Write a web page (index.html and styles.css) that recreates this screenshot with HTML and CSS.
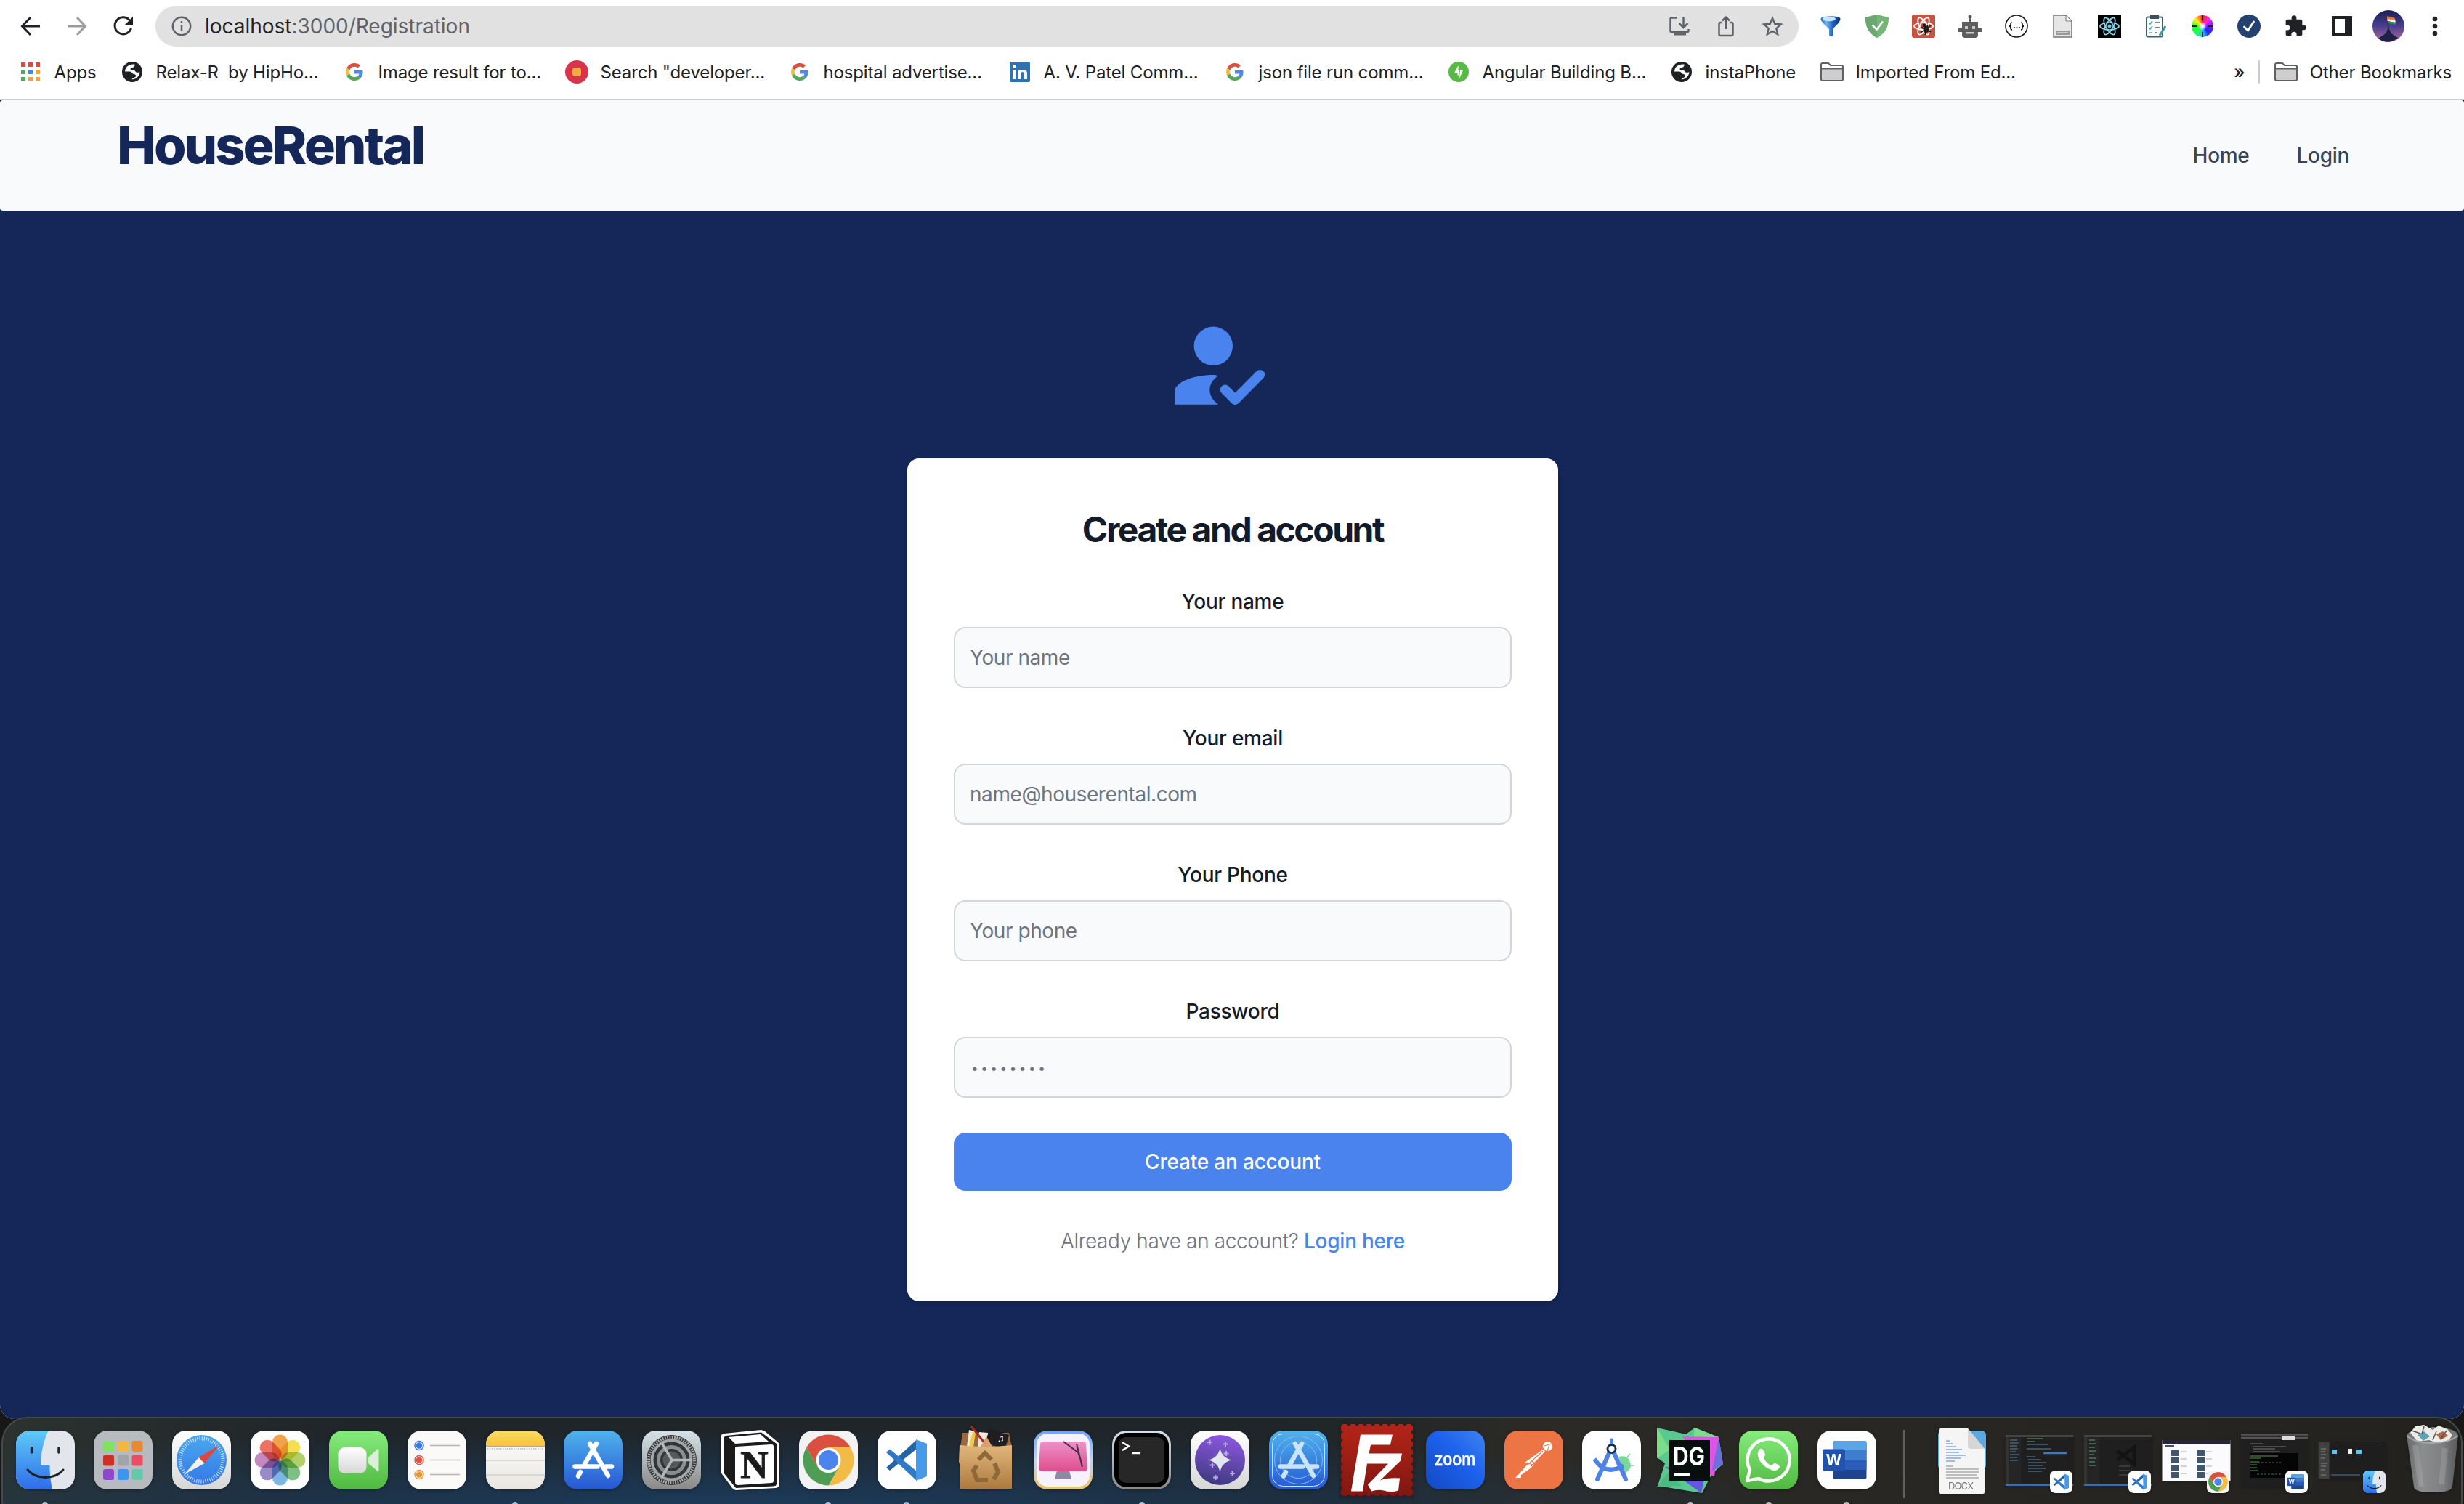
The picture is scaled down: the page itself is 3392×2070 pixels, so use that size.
FILE: index.html
```html
<!DOCTYPE html>
<html lang="en">
<head>
<meta charset="utf-8">
<title>HouseRental</title>
<link rel="stylesheet" href="styles.css">
</head>
<body>
<svg class="defs" width="0" height="0">
  <defs>
    <linearGradient id="gBlue" x1="0" y1="0" x2="0" y2="1"><stop offset="0" stop-color="#4fb3ec"/><stop offset="1" stop-color="#2657d3"/></linearGradient>
    <linearGradient id="gFinder" x1="0" y1="0" x2="0" y2="1"><stop offset="0" stop-color="#5ecbf7"/><stop offset="1" stop-color="#2f6ceb"/></linearGradient>
    <linearGradient id="gWhite" x1="0" y1="0" x2="0" y2="1"><stop offset="0" stop-color="#ffffff"/><stop offset="1" stop-color="#d6d6d6"/></linearGradient>
    <linearGradient id="gPaper" x1="0" y1="0" x2="0" y2="1"><stop offset="0" stop-color="#ffffff"/><stop offset="1" stop-color="#e9e6e0"/></linearGradient>
    <linearGradient id="gGreen" x1="0" y1="0" x2="0" y2="1"><stop offset="0" stop-color="#86ec7d"/><stop offset="1" stop-color="#50b940"/></linearGradient>
    <linearGradient id="gSafari" x1="0" y1="0" x2="0" y2="1"><stop offset="0" stop-color="#4aa8ee"/><stop offset="1" stop-color="#3578e6"/></linearGradient>
    <linearGradient id="gYellow" x1="0" y1="0" x2="0" y2="1"><stop offset="0" stop-color="#fbdc67"/><stop offset="1" stop-color="#f6c338"/></linearGradient>
    <linearGradient id="gGrey" x1="0" y1="0" x2="0" y2="1"><stop offset="0" stop-color="#d5e2e9"/><stop offset="1" stop-color="#8b8986"/></linearGradient>
    <linearGradient id="gPink" x1="0" y1="0" x2="0" y2="1"><stop offset="0" stop-color="#ec92c8"/><stop offset="1" stop-color="#df4d8c"/></linearGradient>
    <linearGradient id="gClean" x1="0" y1="0" x2="0" y2="1"><stop offset="0" stop-color="#6ea2f8"/><stop offset=".5" stop-color="#c4d4f5"/><stop offset="1" stop-color="#edc460"/></linearGradient>
    <linearGradient id="gPurple" x1=".6" y1="0" x2=".4" y2="1"><stop offset="0" stop-color="#8c57e0"/><stop offset="1" stop-color="#3e3a80"/></linearGradient>
    <linearGradient id="gZoom" x1="1" y1="0" x2="0" y2="1"><stop offset="0" stop-color="#4084ee"/><stop offset=".4" stop-color="#1f63ee"/><stop offset="1" stop-color="#1249c4"/></linearGradient>
    <linearGradient id="gRed" x1="0" y1="0" x2="0" y2="1"><stop offset="0" stop-color="#b52418"/><stop offset="1" stop-color="#801711"/></linearGradient>
    <linearGradient id="gBag" x1="0" y1="0" x2="0" y2="1"><stop offset="0" stop-color="#e2b77b"/><stop offset="1" stop-color="#ab793f"/></linearGradient>
    <linearGradient id="gTrash" x1="0" y1="0" x2="1" y2="0"><stop offset="0" stop-color="#686a6b"/><stop offset=".3" stop-color="#8b8d8e"/><stop offset=".7" stop-color="#7d7f80"/><stop offset="1" stop-color="#55575a"/></linearGradient>
    <linearGradient id="gSky" x1="0" y1="0" x2="0" y2="1"><stop offset="0" stop-color="#1b1e57"/><stop offset=".5" stop-color="#493f8f"/><stop offset="1" stop-color="#b76b9c"/></linearGradient>
    <linearGradient id="gFunnel" x1="0" y1="0" x2="1" y2="0"><stop offset="0" stop-color="#1f6fd0"/><stop offset=".3" stop-color="#6fb5f2"/><stop offset=".6" stop-color="#1d66c4"/><stop offset="1" stop-color="#0b2f6b"/></linearGradient>

    <symbol id="google" viewBox="0 0 48 48"><path fill="#d9503f" d="M24 9.5c3.5 0 6.700 1.200 9.200 3.600l6.900-6.900C35.900 2.400 30.500 0 24 0 14.600 0 6.500 5.400 2.600 13.200l8 6.200C12.400 13.700 17.700 9.500 24 9.500z"/><path fill="#4f87ec" d="M47 24.600c0-1.600-.2-3.100-.4-4.600H24v9h12.900c-.6 3-2.200 5.500-4.800 7.200l7.700 6C44.400 38 47 31.800 47 24.600z"/><path fill="#f2bd42" d="M10.500 28.600c-.5-1.500-.8-3-.8-4.600s.3-3.100.8-4.600l-8-6.200C.9 16.500 0 20.100 0 24s.9 7.500 2.600 10.800z"/><path fill="#58a65c" d="M24 48c6.500 0 11.900-2.100 15.900-5.800l-7.700-6c-2.200 1.500-4.900 2.300-8.200 2.300-6.300 0-11.600-4.200-13.500-9.900l-8 6.200C6.500 42.600 14.600 48 24 48z"/></symbol>
    <symbol id="globe" viewBox="0 0 28 28"><circle cx="14" cy="14" r="14" fill="#202124"/><path d="M18 3.500C11 2.500 4.500 7 4 13c2 2.500 6 1 8 2.500 1.500 1.500 5 1.500 5 3.500 0 2-4 1.500-4 4.500" fill="none" stroke="#fff" stroke-width="0"/><path fill="#fff" d="M17.500 3.600C10 2.500 4.200 7 4 13.500l6.500 0c3 0 3.500 3 5.500 3.500 2 .4 3.500.8 3 3-.4 2-4.500 1.500-5.500 4.300C19 24.500 24.400 20 24.300 14c-2 1.300-4.800 1.200-6-.8-.8-1.600-3.300-1.200-5.300-1.600-2.400-.6-1.500-3 .5-3.300 2.500-.3 4.500-1.700 4-4.700z"/></symbol>
    <symbol id="folder" viewBox="0 0 32 26"><path d="M1 9h30v14a2 2 0 0 1-2 2H3a2 2 0 0 1-2-2z" fill="#cecece"/><path d="M1 23V3a2 2 0 0 1 2-2h8l3 3h15a2 2 0 0 1 2 2v17a2 2 0 0 1-2 2H3a2 2 0 0 1-2-2zM1 8.500h30" fill="none" stroke="#5f6063" stroke-width="2"/></symbol>
    <symbol id="atom" viewBox="0 0 32 32"><g fill="none" stroke="currentColor" stroke-width="1.700"><ellipse cx="16" cy="16" rx="13" ry="5"/><ellipse cx="16" cy="16" rx="13" ry="5" transform="rotate(60 16 16)"/><ellipse cx="16" cy="16" rx="13" ry="5" transform="rotate(120 16 16)"/></g></symbol>

    <symbol id="finder" viewBox="0 0 81 81"><rect width="81" height="81" rx="19" fill="#e3e5ec"/><path d="M45 0C38 15 34.500 32 34.500 47h12c0 12 1 23 3.500 34H19A19 19 0 0 1 0 62V19A19 19 0 0 1 19 0z" fill="url(#gFinder)"/><path d="M45 0C38 15 34.500 32 34.500 47h12" fill="none" stroke="#fff" stroke-opacity=".5"/><path d="M21.500 24v6M59 24v6" stroke="#1d2837" stroke-width="3.500" stroke-linecap="round"/><path d="M16 54c12 14 37 14 49 0" fill="none" stroke="#1d2128" stroke-width="3" stroke-linecap="round"/></symbol>
    <symbol id="chrome" viewBox="0 0 81 81"><rect width="81" height="81" rx="19" fill="#f2f2f2"/><path d="M40.500 40.500L10.200 23A35 35 0 0 1 70.800 23z" fill="#d95040"/><path d="M40.500 23h30.300A35 35 0 0 1 40.500 75.500L55.700 49.200z" fill="#f2bb45"/><path d="M40.500 75.500A35 35 0 0 1 10.200 23L25.300 49.200A17.500 17.500 0 0 0 55.700 49.200z" fill="#4f9c55"/><path d="M10.200 23L25.300 49.200 33 30z" fill="#d95040"/><circle cx="40.500" cy="40.500" r="17" fill="#fff"/><circle cx="40.500" cy="40.500" r="13.500" fill="#4b84ec"/></symbol>
    <symbol id="vscode" viewBox="0 0 81 81"><rect width="81" height="81" rx="19" fill="#fff"/><path d="M12 51l5 4 37-30V12.500z" fill="#2364a5"/><path d="M12 30l5-4.500L54 56v13z" fill="#2f7ac7"/><path d="M53 12l15 6v45l-15 6z" fill="#479ae9"/></symbol>
    <symbol id="word" viewBox="0 0 81 81"><rect width="81" height="81" rx="19" fill="#fff"/><rect x="21.500" y="14" width="46" height="53" rx="3" fill="#1e438f"/><path d="M21.500 41h46v13h-46z" fill="#2b5cb8"/><path d="M21.500 27h46v14h-46z" fill="#3f7dce"/><path d="M21.500 27V17a3 3 0 0 1 3-3h40a3 3 0 0 1 3 3v10z" fill="#5ba4e6"/><rect x="7" y="25.500" width="31" height="30" rx="3" fill="#2152ae"/><text x="22.500" y="48" font-size="21" font-weight="700" fill="#fff" text-anchor="middle">W</text></symbol>
    <symbol id="appA" viewBox="0 0 81 81"><g stroke="currentColor" stroke-width="6.500" stroke-linecap="round" fill="none"><path d="M45 18L29 46M36 18l25 44M15.500 49.500h31M58 49.500h8M23 57l-3 5.500"/></g></symbol>
    <symbol id="codewin" viewBox="0 0 94 70"><rect width="94" height="70" fill="#1f1f20"/><rect width="94" height="3" fill="#444"/><rect y="3" width="5" height="65" fill="#333"/><rect x="5" y="3" width="17" height="65" fill="#252526"/><rect y="68" width="94" height="2" fill="#2473c8"/></symbol>
  </defs>
</svg>

<div class="window">
  <header class="toolbar">
    <div class="cell"><svg width="28" height="28" viewBox="0 0 28 28" fill="none" stroke="#202124" stroke-width="3"><path d="M27 14H3M14 2L2.500 14 14 26"/></svg></div>
    <div class="cell"><svg width="28" height="28" viewBox="0 0 28 28" fill="none" stroke="#9b9c9e" stroke-width="3"><path d="M1 14h24M14 2l11.500 12L14 26"/></svg></div>
    <div class="cell"><svg width="28" height="28" viewBox="0 0 28 28"><path d="M24.500 17A11.500 11.500 0 1 1 22 5.500l2 2.500" fill="none" stroke="#202124" stroke-width="3"/><path d="M27 1v11H16z" fill="#202124"/></svg></div>
    <div class="omnibox">
      <svg width="28" height="28" viewBox="0 0 28 28" fill="none" stroke="#5f6368" stroke-width="2.500"><circle cx="14" cy="14" r="12.200"/><path d="M14 12.500V21M14 7v3"/></svg>
      <span class="url"><b>localhost</b>:3000/Registration</span>
      <div class="cell"><svg width="28" height="28" viewBox="0 0 28 28" fill="none" stroke="#5f6368" stroke-width="2.500"><path d="M11 2.500H3a1.500 1.500 0 0 0-1.500 1.500v16.500A1.500 1.500 0 0 0 3 22h22a1.500 1.500 0 0 0 1.500-1.500V18M19.500 1v15M13.500 10l6 6 6-6"/><path d="M6 22h17v4.500H6z" fill="#5f6368" stroke="none"/></svg></div>
      <div class="cell"><svg width="28" height="30" viewBox="0 0 28 30" fill="none" stroke="#5f6368" stroke-width="2.500"><path d="M9 10H6.500A2 2 0 0 0 4.500 12v14a2 2 0 0 0 2 2h15a2 2 0 0 0 2-2V12a2 2 0 0 0-2-2H19M14 19V3M9 7.500l5-5 5 5"/></svg></div>
      <div class="cell"><svg width="30" height="30" viewBox="0 0 30 30" fill="none" stroke="#5f6368" stroke-width="2.400"><path d="M15 4l3.300 7.800 8.400.7-6.400 5.600 1.900 8.200L15 22l-7.200 4.300 1.900-8.200-6.400-5.600 8.400-.7z"/></svg></div>
    </div>
    <div class="cell"><svg width="32" height="32" viewBox="0 0 32 32"><path d="M2.500 6c0-5 27-5 27 0 0 4-6 9-10.500 14v9c-1.500 1.500-4 1.500-5 0v-9C9.500 15 2.500 10 2.500 6z" fill="url(#gFunnel)"/><ellipse cx="14" cy="6" rx="9" ry="3.200" fill="#c9e6fb"/></svg></div>
    <div class="cell"><svg width="32" height="32" viewBox="0 0 32 32"><path d="M16 0l16 4c0 14-5 22-16 28C5 26 0 18 0 4z" fill="#76b578"/><path d="M16 0v32C5 26 0 18 0 4z" fill="#6ba772"/><path d="M9.500 14.500l6 6L24 9.500" fill="none" stroke="#fff" stroke-width="2.600"/></svg></div>
    <div class="cell"><svg class="white" width="32" height="32" viewBox="0 0 32 32"><rect width="32" height="32" rx="3" fill="#c9523f"/><use href="#atom"/><g fill="none" stroke="#1c1c1c" stroke-width="1.500"><path d="M12 17l14 7M26 15l-14 10M22 14l-4 14"/></g><ellipse cx="20" cy="20.500" rx="4" ry="5" fill="#1c1c1c" transform="rotate(25 20 20)"/><circle cx="17" cy="15" r="2.500" fill="#1c1c1c"/></svg></div>
    <div class="cell"><svg width="32" height="32" viewBox="0 0 32 32" fill="#5d5d5d"><path d="M15 3h2v8h-2zM5 10h22v8h3a2 2 0 0 1 2 2v4h-5v6l-3 2H8l-3-2v-6H0v-4a2 2 0 0 1 2-2h3z"/><circle cx="16" cy="3" r="2.500"/><path d="M9 16h4v4H9zM19 16h4v4h-4zM10 24h12v2.500H10z" fill="#c6c6c6"/></svg></div>
    <div class="cell"><svg width="32" height="32" viewBox="0 0 32 32"><circle cx="16" cy="16" r="15" fill="#fff" stroke="#151515" stroke-width="1.600"/><path d="M10 11c-4 0 0 5-4 5 4 0 0 5 4 5M22 11c4 0 0 5 4 5-4 0 0 5-4 5" fill="none" stroke="#151515" stroke-width="1.700"/><path d="M12 18h2M15.500 18h2M19 18h2" stroke="#151515" stroke-width="1.700"/></svg></div>
    <div class="cell"><svg width="32" height="32" viewBox="0 0 32 32"><path d="M3 1h17l8 8v22H3z" fill="#e6e6e6" stroke="#777" stroke-width="1.500"/><path d="M20 1v8h8z" fill="#fff" stroke="#777"/><path d="M6 22h19v6H6z" fill="#999"/><path d="M8 24h15v2H8z" fill="#ccc"/></svg></div>
    <div class="cell"><svg class="cyan" width="32" height="32" viewBox="0 0 32 32"><rect width="32" height="32" fill="#000"/><use href="#atom"/><circle cx="16" cy="16" r="2.500" fill="#5bc8e6"/></svg></div>
    <div class="cell"><svg width="32" height="32" viewBox="0 0 32 32" fill="none"><rect x="3" y="3.500" width="22" height="27" rx="2" stroke="#40606b" stroke-width="2"/><path d="M8 1h12v5H8z" fill="#38535f"/><path d="M14 11h7M14 18h7M14 25h4" stroke="#40606b" stroke-width="1.600"/><path d="M6 11l2 2 3-4M6 18l2 2 3-4M6 25h4" stroke="#4fa7b3" stroke-width="1.600"/><path d="M29 16l-8 13" stroke="#3f96a6" stroke-width="3"/></svg></div>
    <div class="cell"><div class="wheel"><svg width="30" height="30" viewBox="0 0 30 30"><path d="M15 0v7M15 23v7M0 15h7M23 15h7" stroke="#222" stroke-width="2"/></svg></div></div>
    <div class="cell"><svg width="32" height="32" viewBox="0 0 32 32"><circle cx="16" cy="16" r="16" fill="#244270"/><path d="M9.500 17l5 5 8-12" fill="none" stroke="#fff" stroke-width="2.800" stroke-linecap="round"/></svg></div>
    <div class="cell"><svg width="32" height="32" viewBox="0 0 24 24" fill="#202124"><path d="M20.500 11H19V7a2 2 0 0 0-2-2h-4V3.500a2.500 2.500 0 0 0-5 0V5H4a2 2 0 0 0-2 2v3.800h1.500a2.700 2.700 0 0 1 0 5.400H2V20a2 2 0 0 0 2 2h3.800v-1.500a2.700 2.700 0 0 1 5.400 0V22H17a2 2 0 0 0 2-2v-4h1.500a2.500 2.500 0 0 0 0-5z"/></svg></div>
    <div class="cell"><svg width="28" height="28" viewBox="0 0 28 28"><path d="M0 0h28v28H0zM4 4v20h14V4z" fill="#202124" fill-rule="evenodd"/></svg></div>
    <div class="cell"><svg width="44" height="44" viewBox="0 0 44 44"><circle cx="22" cy="22" r="22" fill="url(#gSky)"/><path d="M8 39l10-7 4-8 4 8 9 6c-8 7-19 8-27 1z" fill="#1c2145"/><path d="M20 7l2 19" stroke="#2a2a44" stroke-width="1.500"/><path d="M20 8l11 3v3l-11-2z" fill="#e8773b"/><path d="M20.500 12l11 2v3l-11-2z" fill="#fff"/><path d="M21 15l11 2v3l-10-2z" fill="#2d8f52"/></svg></div>
    <div class="cell"><svg width="8" height="28" viewBox="0 0 8 28" fill="#202124"><circle cx="4" cy="4" r="3.300"/><circle cx="4" cy="14" r="3.300"/><circle cx="4" cy="24" r="3.300"/></svg></div>
  </header>

  <nav class="bookmarks">
    <a class="bm w-apps"><svg width="32" height="26" viewBox="0 0 32 26"><g fill="#da4c3f"><path d="M3 0h6v6H3zM13 0h6v6h-6zM23 0h6v6h-6z"/></g><path d="M3 10h6v6H3zM3 20h6v6H3z" fill="#58a65c"/><path d="M13 10h6v6h-6z" fill="#4b84ec"/><path d="M23 10h6v6h-6zM13 20h6v6h-6zM23 20h6v6h-6z" fill="#e6a63a"/></svg><span>Apps</span></a>
    <a class="bm w-306"><svg width="32" height="28"><use href="#globe" x="2" width="28" height="28"/></svg><span>Relax-R&nbsp; by HipHo...</span></a>
    <a class="bm w-306"><svg width="32" height="24"><use href="#google" x="4" width="24" height="24"/></svg><span>Image result for to...</span></a>
    <a class="bm w-307"><svg width="32" height="32"><circle cx="16" cy="16" r="16" fill="#d93449"/><rect x="10" y="10" width="12" height="12" rx="4" fill="#f0ac43"/></svg><span>Search "developer...</span></a>
    <a class="bm w-303"><svg width="32" height="24"><use href="#google" x="4" width="24" height="24"/></svg><span>hospital advertise...</span></a>
    <a class="bm w-296"><svg width="32" height="28"><rect x="2" width="28" height="28" rx="2" fill="#3071b0"/><path d="M6 11h4v13H6zM6 4h4v4H6zM13 11h4v2c2-3 9-3 9 3v8h-4v-7c0-4-5-4-5 0v7h-4z" fill="#fff"/></svg><span>A. V. Patel Comm...</span></a>
    <a class="bm w-308"><svg width="32" height="24"><use href="#google" x="4" width="24" height="24"/></svg><span>json file run comm...</span></a>
    <a class="bm w-307"><svg width="32" height="28"><circle cx="16" cy="14" r="14" fill="#58b947"/><path d="M15.500 5L10 15.500h4.500v3h2.500V12h-1.500zM17 23l5-11h-4v-2" fill="#fff"/></svg><span>Angular Building B...</span></a>
    <a class="bm w-207"><svg width="32" height="28"><use href="#globe" x="2" width="28" height="28"/></svg><span>instaPhone</span></a>
    <a class="bm grow"><svg width="32" height="26"><use href="#folder" width="32" height="26"/></svg><span>Imported From Ed...</span></a>
    <span class="more">»</span>
    <span class="rule"></span>
    <a class="bm"><svg width="32" height="26"><use href="#folder" width="32" height="26"/></svg><span>Other Bookmarks</span></a>
  </nav>

  <div class="page">
    <nav class="site-nav">
      <a class="brand">HouseRental</a>
      <div class="links"><a>Home</a><a>Login</a></div>
    </nav>
    <main class="signup">
      <svg class="badge" width="192" height="150" viewBox="0 0 192 150"><g fill="#4a83ee"><circle cx="70.300" cy="46.300" r="26.700"/><path d="M17 126.700V109C17 96 43 86 70 86c3 0 5 .3 7 1.300C61.500 98 61.500 115 77 126.700z"/></g><path d="M86.500 106.300l13.800 14 34.200-34.700" fill="none" stroke="#4a83ee" stroke-width="13.400" stroke-linecap="round" stroke-linejoin="round"/></svg>
      <form class="card">
        <h1>Create and account</h1>
        <label><span>Your name</span><input type="text" placeholder="Your name"></label>
        <label><span>Your email</span><input type="text" placeholder="name@houserental.com"></label>
        <label><span>Your Phone</span><input type="text" placeholder="Your phone"></label>
        <label><span>Password</span><input class="dots" type="text" placeholder="••••••••"></label>
        <button type="button">Create an account</button>
        <p>Already have an account? <a>Login here</a></p>
      </form>
    </main>
  </div>
</div>

<footer class="dock">
  <div class="app run"><svg viewBox="0 0 81 81"><use href="#finder"/></svg></div>
  <div class="app"><svg viewBox="0 0 81 81"><rect width="81" height="81" rx="19" fill="#b7babf"/><g><rect x="13" y="14" width="15" height="15" rx="3" fill="#7de360"/><rect x="33" y="14" width="15" height="15" rx="3" fill="#f2b93e"/><rect x="52.500" y="14" width="15" height="15" rx="3" fill="#e78a35"/><rect x="13" y="33.500" width="15" height="15" rx="3" fill="#cd3024"/><rect x="33" y="33.500" width="15" height="15" rx="3" fill="#9fa5a9"/><rect x="52.500" y="33.500" width="15" height="15" rx="3" fill="#eb4d63"/><rect x="13" y="53" width="15" height="15" rx="3" fill="#9148c8"/><rect x="33" y="53" width="15" height="15" rx="3" fill="#3f94f0"/><rect x="52.500" y="53" width="15" height="15" rx="3" fill="#66c8a8"/></g></svg></div>
  <div class="app"><svg viewBox="0 0 81 81"><rect width="81" height="81" rx="19" fill="url(#gWhite)"/><circle cx="40.500" cy="40.500" r="34.500" fill="url(#gSafari)"/><circle cx="40.500" cy="40.500" r="29.500" fill="none" stroke="#d8ecfd" stroke-width="5" stroke-dasharray="1 2.090"/><path d="M65 20L44.500 45 36.500 37z" fill="#e0463a"/><path d="M17 60l19.500-23 8 8z" fill="#f3f3f3"/></svg></div>
  <div class="app"><svg viewBox="0 0 81 81"><rect width="81" height="81" rx="19" fill="#fdfdfd"/><g class="petals"><rect x="30" y="5.500" width="21" height="34" rx="10.500" fill="#f19a38"/><rect x="30" y="5.500" width="21" height="34" rx="10.500" fill="#f5dd3e" transform="rotate(45 40.500 40.500)"/><rect x="30" y="5.500" width="21" height="34" rx="10.500" fill="#a9cf58" transform="rotate(90 40.500 40.500)"/><rect x="30" y="5.500" width="21" height="34" rx="10.500" fill="#71ba76" transform="rotate(135 40.500 40.500)"/><rect x="30" y="5.500" width="21" height="34" rx="10.500" fill="#6fb1e3" transform="rotate(180 40.500 40.500)"/><rect x="30" y="5.500" width="21" height="34" rx="10.500" fill="#8d80c4" transform="rotate(225 40.500 40.500)"/><rect x="30" y="5.500" width="21" height="34" rx="10.500" fill="#c07db8" transform="rotate(270 40.500 40.500)"/><rect x="30" y="5.500" width="21" height="34" rx="10.500" fill="#ec6553" transform="rotate(315 40.500 40.500)"/></g></svg></div>
  <div class="app"><svg viewBox="0 0 81 81"><rect width="81" height="81" rx="19" fill="url(#gGreen)"/><rect x="12.500" y="23" width="39" height="36" rx="9" fill="url(#gWhite)"/><path d="M54 37l13-12q1.500 0 1.500 2v27q0 2-1.500 2L54 45z" fill="#dcefd8"/></svg></div>
  <div class="app"><svg viewBox="0 0 81 81"><rect width="81" height="81" rx="19" fill="#fbfaf9"/><path d="M31 20.500h41M31 40.500h41M31 60.500h41" stroke="#b5b5b8" stroke-width="1.600"/><g fill="none" stroke-width="1.500"><g stroke="#3478ee"><circle cx="16" cy="20.500" r="6"/><circle cx="16" cy="20.500" r="3.500" fill="#3478ee"/></g><g stroke="#e64f40"><circle cx="16" cy="40.500" r="6"/><circle cx="16" cy="40.500" r="3.500" fill="#e64f40"/></g><g stroke="#e8953a"><circle cx="16" cy="60.500" r="6"/><circle cx="16" cy="60.500" r="3.500" fill="#e8953a"/></g></g></svg></div>
  <div class="app run"><svg viewBox="0 0 81 81"><rect width="81" height="81" rx="19" fill="url(#gPaper)"/><path d="M0 21v-2A19 19 0 0 1 19 0h43a19 19 0 0 1 19 19v2z" fill="url(#gYellow)"/><path d="M0 21.500h81" stroke="#b9a98a"/><path d="M2 25h77" stroke="#bbb" stroke-width="1.500" stroke-dasharray="1.500 1.500"/><path d="M0 41h81M0 61h81" stroke="#cfcfd2" stroke-width="1.300"/></svg></div>
  <div class="app"><svg class="white" viewBox="0 0 81 81"><rect width="81" height="81" rx="19" fill="url(#gBlue)"/><use href="#appA"/></svg></div>
  <div class="app"><svg viewBox="0 0 81 81"><rect width="81" height="81" rx="19" fill="url(#gGrey)"/><circle cx="40.500" cy="40.500" r="34.500" fill="#333638"/><g fill="none"><circle cx="40.500" cy="40.500" r="31.500" stroke="#a9abac" stroke-width="4" stroke-dasharray="1.800 1.500"/><circle cx="40.500" cy="40.500" r="27" stroke="#a4a7a8" stroke-width="4"/><circle cx="40.500" cy="40.500" r="18" stroke="#8c8f91" stroke-width="5"/><circle cx="40.500" cy="40.500" r="12" fill="#56595b"/><path d="M41 40.500h27M41 40.500L27 17M41 40.500L27 64" stroke="#b4b7b8" stroke-width="3.500"/></g></svg></div>
  <div class="app"><svg viewBox="0 0 81 81"><path d="M5 4L56-1l5 2 18 15q2 2 2 4v53q0 5-5 6l-55 3q-3 0-5-3L2 60Q0 57 0 54V9q0-4 5-5z" fill="#fff"/><path d="M7 7l49-4.500L77 18v55q0 3-4 3.500l-52 2.500L4 58V10z" fill="#1b1b1b"/><path d="M11 9l44-4 11 10-46 3z" fill="#fff"/><path d="M21 22l49-3q3 0 3 3v47q0 3-3 3l-46 3q-4 0-4-4V25q0-3 1-3z" fill="#fff"/><text class="serif" x="46.500" y="65" font-size="53" font-weight="700" fill="#1b1b1b" stroke="#1b1b1b" text-anchor="middle">N</text></svg></div>
  <div class="app run"><svg viewBox="0 0 81 81"><use href="#chrome"/></svg></div>
  <div class="app run"><svg viewBox="0 0 81 81"><use href="#vscode"/></svg></div>
  <div class="app"><svg viewBox="0 0 81 81"><path d="M9 3h64l4 20H6z" fill="#9c683d"/><path d="M15 22L18-1l9 2-3 21zM30 22l2-20 12 1v19z" fill="#eee8df"/><path d="M18 22l5-20 4 1-4 19z" fill="#f4c93a"/><path d="M21-6l20 25" stroke="#a42c20" stroke-width="3"/><path d="M46-2l27 8-5 19-28-7z" fill="#1f1f21"/><text x="57" y="15" font-size="13" fill="#fff">♫</text><path d="M34 22l8-14 8 14z" fill="#da9d72"/><path d="M5 20q36 4 72 0l0 60q-36 2-72 0l1-32-2-5z" fill="url(#gBag)"/><path d="M31 40l9-9 9 9M53 45l5 12-6 10M44 68H29l-5-13 5-7" fill="none" stroke="#8f6839" stroke-width="6"/></svg></div>
  <div class="app"><svg viewBox="0 0 81 81"><rect width="81" height="81" rx="19" fill="url(#gClean)"/><rect x="4" y="4" width="73" height="73" rx="15" fill="#f6f2fd"/><path d="M32 55h17l3 12H29z" fill="#8f88a5"/><path d="M13 15h55q4 0 4 4l2 32q0 5-5 5H12q-5 0-5-5l2-32q0-4 4-4z" fill="url(#gPink)"/><path d="M41 15l20 15M59 18l8 32M61 30l3 8" fill="none" stroke="#412c4a" stroke-width="2"/></svg></div>
  <div class="app run"><svg viewBox="0 0 81 81"><rect width="81" height="81" rx="19" fill="url(#gGrey)"/><rect x="3" y="3" width="75" height="75" rx="17" fill="#000"/><rect x="9" y="9" width="63" height="63" rx="10" fill="#272727"/><path d="M14 16l9 5.500-9 5.500M27 31h12" fill="none" stroke="#fff" stroke-width="2.500"/></svg></div>
  <div class="app"><svg viewBox="0 0 81 81"><rect width="81" height="81" rx="19" fill="url(#gWhite)"/><circle cx="40.500" cy="40.500" r="34.500" fill="url(#gPurple)"/><path d="M40.500 23q2 15 17 17.500-15 2.500-17 17.500-2-15-17-17.500 15-2.500 17-17.500z" fill="#e2e7ef"/><path d="M26.500 12.500v7M23 16h7M48 15v7M44.500 18.500h7M49 28v7M45.500 31.500h7M30 44v7M26.500 47.500h7M34.500 61v7M31 64.500h7M57.500 55.500v7M54 59h7" stroke="#b8a7ec" stroke-width="2"/></svg></div>
  <div class="app"><svg class="ice" viewBox="0 0 81 81"><rect width="81" height="81" rx="19" fill="url(#gBlue)"/><rect x="4.500" y="4.500" width="72" height="72" rx="15" fill="none" stroke="#d3ebfc"/><circle cx="40.500" cy="40.500" r="33" fill="none" stroke="#85bdf2"/><circle cx="40.500" cy="40.500" r="25" fill="none" stroke="#85bdf2"/><use href="#appA"/></svg></div>
  <div class="app"><svg viewBox="0 0 81 81"><rect x="-9" y="-9" width="99" height="99" fill="url(#gRed)"/><rect x="-9" y="-9" width="99" height="99" fill="none" stroke="#23262a" stroke-width="5" stroke-linecap="round" stroke-dasharray="0 11"/><path d="M18 5.500h44l-3 14H32l-2.500 12H75l-2 10-28 27q10-4 27-3l-2 17q-10 3-20 0-9-2-17 1l-5-9 28-29H27l-6 38H5z" fill="#fff"/></svg></div>
  <div class="app"><svg viewBox="0 0 81 81"><rect width="81" height="81" rx="19" fill="url(#gZoom)"/><text x="40" y="47.500" font-size="25" font-weight="500" fill="#fff" stroke="#fff" stroke-width=".5" text-anchor="middle" textLength="57" lengthAdjust="spacingAndGlyphs">zoom</text></svg></div>
  <div class="app"><svg viewBox="0 0 81 81"><rect width="81" height="81" rx="19" fill="#ed7545"/><circle cx="59.500" cy="21.500" r="6.500" fill="#fff"/><path d="M55 21l9-3M59 28l3-9" stroke="#ed7545"/><path d="M53 26L28 44l5 1-13 15-5 5h8v-4l14-10 19-23z" fill="#fff"/><path d="M53 28L32 47M55 31L36 50M30 44l9 3M38 42l5 4" stroke="#ed7545" stroke-width="1.200"/></svg></div>
  <div class="app"><svg viewBox="0 0 81 81"><rect width="81" height="81" rx="19" fill="#fff"/><path d="M50 36q15-4 17 12 0 6-8 11z" fill="#79d897"/><path d="M62 37l4-5M66 48h6" stroke="#79d897" stroke-width="1.500"/><g fill="none" stroke="#4f82e6"><path d="M40.500 13v8" stroke-width="5" stroke-linecap="round"/><path d="M37 31L21 67M44 31l16 36" stroke-width="6" stroke-linecap="round"/><path d="M17 39q15 24 40 9" stroke-width="6"/></g><circle cx="40.500" cy="25" r="5.500" fill="#fff" stroke="#173244" stroke-width="3"/></svg></div>
  <div class="app run"><svg viewBox="0 0 81 81"><path d="M-5-4l40 9 12-9 33 13 6 37-15 13-14 27-61-10 10-31-11-8z" fill="#58c98f"/><path d="M47-4l33 13-35 7zM-5-4l18 30-18 12z" fill="#7bdc8b"/><path d="M30 8l50 1-6 55-15-10z" fill="#dd55e6"/><path d="M80 9l6 37-15 10z" fill="#6d70d9"/><path d="M6 50l50 36 7-33z" fill="#6555e0"/><path d="M-5 77l16-20 18 19z" fill="#4cba84"/><rect x="12" y="13" width="56" height="56" fill="#080d0d"/><text x="17" y="48" font-size="36" font-weight="700" fill="#fff" textLength="44" lengthAdjust="spacingAndGlyphs">DG</text><path d="M19 60.500h21" stroke="#fff" stroke-width="4"/></svg></div>
  <div class="app run"><svg viewBox="0 0 81 81"><rect width="81" height="81" rx="19" fill="url(#gGreen)"/><path d="M11 69l4-15A29 29 0 1 1 27 66z" fill="none" stroke="#fff" stroke-width="4.500" stroke-linejoin="round"/><path d="M28 26c3-3 6 0 8 7 0 2-3 4-2 5 3 5 6 8 10 10 2 0 4-4 6-3 6 3 7 4 5 7-4 5-10 3-17-1C29 45 22 33 28 26z" fill="#fff"/></svg></div>
  <div class="app run"><svg viewBox="0 0 81 81"><use href="#word"/></svg></div>
  <div class="divider"></div>
  <div class="app"><svg viewBox="0 0 81 81"><rect x="9" y="0" width="66" height="54" rx="6" fill="#5ba9dd"/><path d="M12-3h38l23 28v60q0 2-2 2H12q-2 0-2-2V-1q0-2 2-2z" fill="#f5f5f5"/><path d="M50-3v24q0 4 4 4h19z" fill="#d6d6d6"/><path d="M20 14h5M20 18h9M20 22h14M20 26h22M20 30h18M20 34h27M20 38h20M20 42h12" stroke="#9fbedc" stroke-width="2"/><path d="M20 49h10M20 53h45M20 57h45M20 61h42M20 65h45" stroke="#aaa" stroke-width="1.400"/><text x="23" y="81" font-size="13" fill="#777" textLength="35">DOCX</text></svg></div>
  <div class="app"><svg viewBox="0 0 81 81"><use href="#codewin" x="-6.500" y="6" width="94" height="70"/><g stroke-width="1.300" stroke="#4a6377"><path d="M0 13h10M0 17h12M0 21h9M0 25h11M0 29h8M0 33h12M0 37h10M0 41h11"/><path d="M23 11h22M23 15h11" stroke="#55784f"/><path d="M23 19h30M23 25h34M23 36h12M25 40h18M25 44h25M25 48h20M25 52h24M25 56h19"/><path d="M46 31h32" stroke="#3a79c5" stroke-width="2.500"/></g><use href="#vscode" x="55" y="55" width="31" height="31"/></svg></div>
  <div class="app"><svg viewBox="0 0 81 81"><use href="#codewin" x="-6.500" y="6" width="94" height="70"/><path d="M1 13h8M1 18h10M1 23h8M1 28h9M1 33h6M1 38h10M1 43h8M1 48h9" stroke="#4f7563" stroke-width="1.300"/><path d="M40 28l23 18V23L40 40" fill="none" stroke="#141414" stroke-width="5"/><path d="M42 49h15M42 55h15M42 61h12" stroke="#555"/><use href="#vscode" x="55" y="55" width="31" height="31"/></svg></div>
  <div class="app"><svg viewBox="0 0 81 81"><rect x="-6.500" y="13" width="94" height="56" fill="#fbfbfd"/><rect x="-6.500" y="13" width="94" height="6" fill="#272539"/><path d="M-2 21h12" stroke="#454b78" stroke-width="2"/><g fill="#40566c"><path d="M6 27h11v8H6zM41 27h11v8H41zM6 37h11v8H6zM41 37h11v8H41zM6 47h11v8H6zM41 47h11v8H41zM6 57h11v8H6zM41 57h11v8H41z"/></g><path d="M19 29h8M54 29h8M19 39h8M54 39h8M19 49h8M54 49h8M19 59h8M54 59h8" stroke="#aaa"/><use href="#chrome" x="55" y="55" width="31" height="31"/></svg></div>
  <div class="app"><svg viewBox="0 0 81 81"><rect x="-6" y="4" width="92" height="74" fill="#1f1f20"/><path d="M-6 5.500h92M-6 10h92" stroke="#555" stroke-width="2.500"/><path d="M50 8h19v5H50z" fill="#ddd"/><path d="M6 18h18M11 22h45M11 25h30M11 29h37" stroke="#777"/><rect x="6" y="31" width="67" height="34" fill="#050505"/><path d="M7 35h38M7 38h14M7 43h12M7 47h9M7 51h9M7 55h10" stroke="#579c45"/><path d="M17 44h32M16 60h35" stroke="#467343" stroke-dasharray="3 2"/><use href="#word" x="55" y="55" width="31" height="31"/></svg></div>
  <div class="app"><svg viewBox="0 0 81 81"><rect x="-6.500" y="16" width="94" height="50" rx="2" fill="#1e1e1f"/><rect x="-6.500" y="16" width="15" height="50" fill="#414141"/><path d="M-3 18.500h6M18 18.500h7M48 18.500h30" stroke="#888"/><path d="M-3 25h7M-3 29h6M-3 33h7M-3 38h6M-3 45h9M-3 49h7M-3 54h6M-3 61h7" stroke="#888"/><path d="M12 26h7v6h-7zM46 26h7v6h-7z" fill="#66bfe9"/><path d="M35 25h5v7h-5z" fill="#eee"/><path d="M11 61h40" stroke="#417ba4"/><use href="#finder" x="55" y="55" width="31" height="31"/></svg></div>
  <div class="app"><svg viewBox="0 0 81 81"><path d="M7 6q2-5 18-7l18-4 20 2q14 3 15 9l-8 71q-1 8-27 8T17 77z" fill="url(#gTrash)"/><ellipse cx="42.500" cy="6" rx="34" ry="10" fill="#77797a"/><path d="M12 3l7-9 12-2 12 7 8-6 12 5 7 8-6 9-17 1-9-3-16 2z" fill="#ecebe8"/><path d="M22 6l9-5 8 7-9 6z" fill="#5ea3b3"/><path d="M48 5l9-4 7 6-10 6z" fill="#b06345"/><path d="M14 0l12 4M31-6l-3 11M48 1l-5 12M62 0l-8 12" stroke="#555" stroke-width="1.500"/><path d="M7 7q12 10 35 10T78 7" fill="none" stroke="#a6a8a9" stroke-width="2"/><path d="M19 20l8 57M60 24l-5 50" stroke="#b5b7b8" stroke-opacity=".3" stroke-width="8"/></svg></div>
</footer>
</body>
</html>
```
FILE: styles.css
```css
* { box-sizing: border-box; }
body {
  margin: 0;
  height: 2070px;
  overflow: hidden;
  display: flex;
  flex-direction: column;
  background: #171717;
  font-family: Inter, "Liberation Sans", sans-serif;
  color: #202124;
}
svg { display: block; flex: none; overflow: visible; }
.defs { position: absolute; }
.white { color: #fff; }
.cyan { color: #8bd9ea; }
.ice { color: #c8e4fb; }
.serif { font-family: "Liberation Serif", serif; }

.window {
  height: 1953px;
  flex: none;
  display: flex;
  flex-direction: column;
  background: #fff;
  border-radius: 0 0 20px 20px;
  overflow: hidden;
}

/* Browser toolbar */
.toolbar { height: 72px; padding-left: 10px; display: flex; align-items: center; }
.cell { width: 64px; flex: none; display: flex; align-items: center; justify-content: center; }
.omnibox {
  width: 2262px;
  height: 56px;
  margin: 0 12px;
  padding: 0 4px 0 22px;
  display: flex;
  align-items: center;
  border-radius: 28px;
  background: #e1e1e1;
}
.url { flex: 1; margin-left: 18px; font-size: 28px; letter-spacing: -0.02px; color: #5f6368; }
.url b { font-weight: 400; color: #202124; }
.wheel {
  width: 30px;
  height: 30px;
  border-radius: 50%;
  background: radial-gradient(circle, #fff 6%, transparent 28%), conic-gradient(#f22, #f2e, #62f, #22f, #2cf, #2f4, #3f3, #fe2, #f22);
}

.bookmarks { height: 66px; padding: 0 17px 10px 26px; display: flex; align-items: center; border-bottom: 2px solid #ccc; font-size: 24px; letter-spacing: -0.15px; }
.bm { display: flex; align-items: center; gap: 16.500px; white-space: nowrap; flex: none; }
.w-apps { width: 140px; }
.w-207 { width: 207px; }
.w-296 { width: 296px; }
.w-303 { width: 303px; }
.w-306 { width: 306px; }
.w-307 { width: 307px; }
.w-308 { width: 308px; }
.bm.grow { flex: 1; }
.more { width: 34px; font-size: 25px; font-weight: 500; }
.rule { width: 2px; height: 32px; margin-right: 20px; background: #ccc; }

/* Site */
.page { flex: 1; background: #152659; display: flex; flex-direction: column; }
.site-nav {
  height: 152px;
  padding: 0 158px 0 161px;
  display: flex;
  justify-content: space-between;
  background: #f9fafc;
  border-radius: 4px;
}
.brand { padding-top: 18px; font-size: 72px; line-height: 88px; font-weight: 800; letter-spacing: -3px; color: #152659; }
.links { display: flex; gap: 65px; padding-top: 56px; font-size: 28px; line-height: 40px; font-weight: 500; letter-spacing: -0.3px; color: #3a4352; }

.signup { display: flex; flex-direction: column; align-items: center; padding-top: 140px; }
.card {
  width: 896px;
  height: 1160px;
  margin: 51px 0 0 2px;
  padding: 64px;
  border-radius: 16px;
  background: #fff;
  box-shadow: 0 2px 6px rgba(0, 0, 0, .2);
  text-align: center;
  font-size: 28px;
  line-height: 40px;
}
h1 { margin: 2px 0 46px; font-size: 48px; line-height: 64px; font-weight: 700; letter-spacing: -2.45px; color: #131a28; white-space: nowrap; }
label { display: block; height: 188px; color: #131a28; font-weight: 500; letter-spacing: -0.25px; }
label span { display: block; padding-top: 1px; margin-bottom: 15px; }
input {
  display: block;
  width: 768px;
  height: 84px;
  padding: 0 20px;
  border: 2px solid #d2d5db;
  border-radius: 16px;
  background: #f9fafc;
  font: 400 28px Inter, sans-serif;
  letter-spacing: -0.43px;
}
input::placeholder { color: #6d7380; opacity: 1; }
.dots { padding: 2px 22px 0; font-size: 17px; letter-spacing: 3.600px; }
button {
  display: block;
  width: 768px;
  height: 80px;
  padding: 0;
  border: 0;
  border-radius: 16px;
  background: #4a83ee;
  color: #fff;
  font: 500 28px Inter, sans-serif;
  letter-spacing: -0.2px;
}
p { margin: 49px 0 0; font-weight: 300; letter-spacing: -0.36px; color: #6d7380; white-space: nowrap; }
p a { font-weight: 500; letter-spacing: -0.25px; color: #4a83ee; }

/* Dock */
.dock {
  height: 150px;
  margin: -3px 2px 0;
  padding: 17px 0 0 17.500px;
  flex: none;
  display: flex;
  gap: 26.850px;
  border: 2px solid #47494b;
  border-radius: 36px;
  background:
    radial-gradient(ellipse 1500px 110px at 1000px 125px, #1c3957 10%, rgba(28, 57, 87, 0) 100%),
    linear-gradient(90deg, #2c322f, #1f2529 14%, #1f2529 52%, #2b2a26 62%, #23221f);
}
.app { width: 81px; flex: none; display: flex; flex-direction: column; align-items: center; }
.app > svg { width: 81px; height: 81px; filter: drop-shadow(0 1px 2px rgba(0, 0, 0, .3)); }
.run::after { content: ""; width: 8px; height: 8px; margin-top: 17px; border-radius: 50%; background: #b4bec6; }
.petals { mix-blend-mode: multiply; opacity: .9; }
.petals rect { mix-blend-mode: multiply; }
.divider { width: 2px; height: 94px; margin: -1px 10.300px 0; background: #62615e; }
```
